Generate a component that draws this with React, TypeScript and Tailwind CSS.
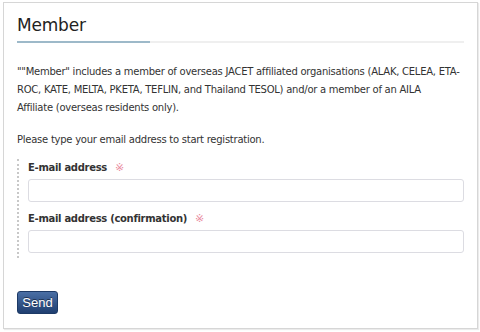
export default function App() {
  return (
    <div className="h-[332px] w-[480px] bg-white pl-[3px] pt-[2px] font-['DejaVu_Sans',sans-serif] text-[#333]">
      <div className="h-[327px] w-[475px] border border-[#d6d6d6] px-[13px] shadow-[1px_1px_1px_rgba(0,0,0,0.08)]">
        <h1 className="pt-[11px] text-[17px] leading-[22px] tracking-[-0.2px] text-[#222]">Member</h1>
        <div className="mt-[5px] flex h-[2px]">
          <div className="w-[133px] bg-[#9db9c9]" />
          <div className="flex-1 bg-[#efefef]" />
        </div>
        <p className="mt-[20px] text-[10px] leading-[18px] tracking-[-0.25px]">
          ""Member" includes a member of overseas JACET affiliated organisations (ALAK, CELEA, ETA-ROC, KATE, MELTA, PKETA, TEFLIN, and Thailand TESOL) and/or a member of an AILA
          <br />
          Affiliate (overseas residents only).
        </p>
        <p className="mt-[14px] text-[10px] leading-[18px] tracking-[-0.25px]">Please type your email address to start registration.</p>
        <div className="mt-[10px] border-l-2 border-dotted border-[#c8c8c8] pb-[5px] pl-[9px] pt-[1px]">
          <label className="flex items-center gap-[8px] text-[10px] font-bold leading-[16px] tracking-[-0.3px]">
            E-mail address <span className="text-[11px] font-normal text-[#ea8aa0]">※</span>
          </label>
          <div className="mt-[3px] h-[23px] rounded-[3px] border border-[#dcdce2] bg-white" />
          <label className="mt-[9px] flex items-center gap-[8px] text-[10px] font-bold leading-[16px] tracking-[-0.3px]">
            E-mail address (confirmation) <span className="text-[11px] font-normal text-[#ea8aa0]">※</span>
          </label>
          <div className="mt-[3px] h-[23px] rounded-[3px] border border-[#dcdce2] bg-white" />
        </div>
        <button className="mt-[33px] h-[23px] w-[41px] rounded-[3px] border border-[#1d3a66] bg-gradient-to-b from-[#4a6fa5] to-[#203f70] font-['Liberation_Sans',sans-serif] text-[13px] text-white [text-shadow:0_-1px_0_rgba(0,0,0,0.5)]">
          Send
        </button>
      </div>
    </div>
  );
}
